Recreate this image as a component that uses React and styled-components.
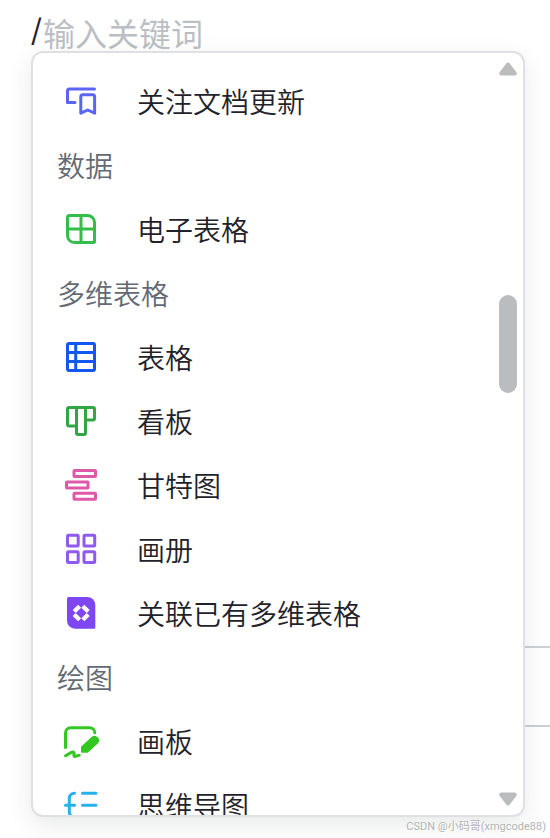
import styled, { createGlobalStyle } from 'styled-components';

const GlobalStyle = createGlobalStyle`
  * {
    box-sizing: border-box;
  }
  body {
    margin: 0;
    background: #fff;
    color: #1f2329;
    font-family: "Noto Sans CJK SC", "Noto Sans", sans-serif;
  }
`

const Page = styled.main`
  display: flex;
  flex-direction: column;
  height: 100vh;
  padding-left: 31px;
  overflow: hidden;
`

const Prompt = styled.label`
  flex: none;
  display: flex;
  align-items: center;
  gap: 1px;
  height: 51px;
  padding-top: 12px;
  font-size: 32px;
  font-weight: 400;
  line-height: 40px;
`

const Slash = styled.span`
  height: 48px;
  font-size: 28px;
  font-weight: 500;
`

const PromptInput = styled.input`
  flex: 1;
  min-width: 0;
  padding: 0;
  border: 0;
  outline: 0;
  background: transparent;
  color: inherit;
  font: inherit;
  &::placeholder {
    color: #bbbfc4;
    opacity: 1;
  }
`

const Body = styled.div`
  flex: 1;
  min-height: 0;
  display: grid;
  grid-template-columns: minmax(0, 1fr) 25px;
  grid-template-rows: minmax(0, 1fr);
`

const Menu = styled.section`
  z-index: 1;
  display: flex;
  overflow: hidden;
  background: #fff;
  border: 2px solid #dee0e3;
  border-radius: 12px;
  box-shadow: 0 8px 24px rgba(31, 35, 41, 0.1);
`

const List = styled.ul`
  flex: 1;
  min-width: 0;
  margin: 0;
  padding: 16px 0 0;
  list-style: none;
  overflow-y: auto;
  scrollbar-width: none;
`

const GroupTitle = styled.li`
  height: 64px;
  padding-left: 24px;
  color: #646a73;
  font-size: 28px;
  font-weight: 350;
  line-height: 64px;
`

const Item = styled.button`
  display: flex;
  align-items: center;
  gap: 32px;
  width: 100%;
  height: 64px;
  padding: 0 0 0 24px;
  border: 0;
  background: transparent;
  color: #1f2329;
  font: inherit;
  font-size: 28px;
  font-weight: 350;
  line-height: 64px;
  text-align: left;
  white-space: nowrap;
  cursor: pointer;
  &:hover {
    background: #f5f6f7;
  }
`

const Icon = styled.svg`
  flex: none;
  width: 48px;
  height: 48px;
  color: ${({color})=> color};
  fill: none;
  stroke: currentColor;
  stroke-width: 3;
  stroke-linejoin: round;
`

const ScrollBar = styled.div`
  flex: none;
  display: grid;
  grid-template-rows: 14px 219fr 98px 400fr 14px;
  width: 18px;
  margin: 9px 6px 9px 0;
`

const ScrollArrow = styled.button`
  grid-row: ${({$end})=> $end?5:1};
  display: block;
  padding: 0;
  border: 0;
  background: transparent;
  &>svg {
    display: block;
    width: 18px;
    height: 14px;
    fill: #bbbcbe;
    stroke: #bbbcbe;
    stroke-width: 4;
    stroke-linejoin: round;
  }
`

const Thumb = styled.div`
  grid-row: 3;
  border-radius: 9px;
  background: #bbbcbe;
`

const DocBlock = styled.div`
  height: 81px;
  margin-top: 595px;
  border: solid #cdd0d4;
  border-width: 2px 0;
`

const Watermark = styled.footer`
  z-index: 1;
  flex: none;
  height: 21px;
  padding-right: 4px;
  color: #b4b4b4;
  font-family: Roboto, "Noto Sans CJK SC", sans-serif;
  font-size: 11px;
  line-height: 20px;
  text-align: right;
  text-shadow: 1px 1px 0 #fff;
`

const items = [
  {
    title: '关注文档更新',
    color: '#5b65f5',
    icon: <>
      <path strokeLinecap="round" d="M37.5 12H12.5a2 2 0 0 0-2 2V25.5H18" />
      <path d="M23.8 36.2V19.8a2 2 0 0 1 2-2H35.6a2 2 0 0 1 2 2V36.2L30.7 33z" />
    </>
  },
  { title: '数据', group: true },
  {
    title: '电子表格',
    color: '#35bd4b',
    icon: <>
      <path d="M12.5 10.5H30.5a7 7 0 0 1 7 7V36.5a1 1 0 0 1-1 1H17.5a7 7 0 0 1-7-7V12.5a2 2 0 0 1 2-2z" />
      <path d="M24 10.5V37.5M10.5 24H37.5" />
    </>
  },
  { title: '多维表格', group: true },
  {
    title: '表格',
    color: '#1456f0',
    icon: <>
      <rect x="10.5" y="10.5" width="27" height="27" rx="1.5" />
      <path d="M18.7 10.5V37.5M10.5 19.6H37.5M10.5 28.6H37.5" />
    </>
  },
  {
    title: '看板',
    color: '#32a645',
    icon: <>
      <path d="M19.5 29H12a1.5 1.5 0 0 1-1.5-1.5V12a1.5 1.5 0 0 1 1.5-1.5H36a1.5 1.5 0 0 1 1.5 1.5V21.5A1.5 1.5 0 0 1 36 23H28.5" />
      <path d="M19.5 10.5V36a1.5 1.5 0 0 0 1.5 1.5H27a1.5 1.5 0 0 0 1.5-1.5V10.5" />
    </>
  },
  {
    title: '甘特图',
    color: '#de5aa8',
    icon: <>
      <rect x="17" y="9.5" width="21.5" height="6" rx="0.5" />
      <rect x="9.5" y="21" width="21.5" height="6" rx="0.5" />
      <rect x="17" y="32.3" width="21.5" height="6" rx="0.5" />
    </>
  },
  {
    title: '画册',
    color: '#9059ef',
    icon: <>
      <rect x="10.5" y="10.3" width="10.7" height="10.7" rx="1" />
      <rect x="27" y="10.3" width="10.7" height="10.7" rx="1" />
      <rect x="10.5" y="26.8" width="10.7" height="10.7" rx="1" />
      <rect x="27" y="26.8" width="10.7" height="10.7" rx="1" />
    </>
  },
  {
    title: '关联已有多维表格',
    color: '#7f47f3',
    icon: <>
      <path fill="currentColor" stroke="none" d="M11.5 8H30.3a8 8 0 0 1 8 8V38.7a1 1 0 0 1-1 1H18a8 8 0 0 1-8-8V9.5A1.5 1.5 0 0 1 11.5 8z" />
      <path stroke="#fff" strokeWidth="4.2" d="M17.2 22.6L22.6 17.2M25.8 17.2L31.2 22.6M31.2 25.4L25.8 30.8M22.6 30.8L17.2 25.4" />
    </>
  },
  { title: '绘图', group: true },
  {
    title: '画板',
    color: '#34c724',
    icon: <>
      <path strokeLinecap="round" d="M8.5 30.5V15.8a5 5 0 0 1 5-5H32.8a5 5 0 0 1 5 5" />
      <path fill="currentColor" strokeWidth="2" d="M25 34.8V30.3L35.4 20.5a3.6 3.6 0 0 1 5 5L30.3 34.8z" />
      <path strokeLinecap="round" d="M8.5 38.8C11 37.2 14 35.2 16 35C18.6 35 15.6 39 17.6 39.4C19 39.6 20.6 38.2 22.2 38.2" />
    </>
  },
  {
    title: '思维导图',
    color: '#28b0ea',
    icon: <path strokeLinecap="round" d="M17.5 12.2a5.2 5.2 0 0 0-5.2 5V31a5.2 5.2 0 0 0 5.2 5M8.5 24.2H17.5M25.5 12.2H39M25.5 24.2H39M25.5 36H39" />
  },
]

const MenuItem = ({title,color,icon}) => {
  return (
    <li>
      <Item type="button">
        <Icon viewBox="0 0 48 48" color={color} aria-hidden="true">{icon}</Icon>
        <span>{title}</span>
      </Item>
    </li>
  )
}

const App = () => {
  return (
    <>
      <GlobalStyle />
      <Page>
        <Prompt>
          <Slash>/</Slash>
          <PromptInput type="text" placeholder="输入关键词" />
        </Prompt>
        <Body>
          <Menu>
            <List>
              {items.map((item)=>{
                return item.group
                  ? <GroupTitle key={item.title}>{item.title}</GroupTitle>
                  : <MenuItem key={item.title} title={item.title} color={item.color} icon={item.icon} />
              })}
            </List>
            <ScrollBar>
              <ScrollArrow type="button" aria-label="向上滚动">
                <svg viewBox="0 0 18 14"><path d="M9 2.5L15.8 11.5H2.2z" /></svg>
              </ScrollArrow>
              <Thumb />
              <ScrollArrow $end type="button" aria-label="向下滚动">
                <svg viewBox="0 0 18 14"><path d="M9 11.5L2.2 2.5H15.8z" /></svg>
              </ScrollArrow>
            </ScrollBar>
          </Menu>
          <DocBlock />
        </Body>
        <Watermark>CSDN @小码哥(xmgcode88)</Watermark>
      </Page>
    </>
  )
}

export default App
